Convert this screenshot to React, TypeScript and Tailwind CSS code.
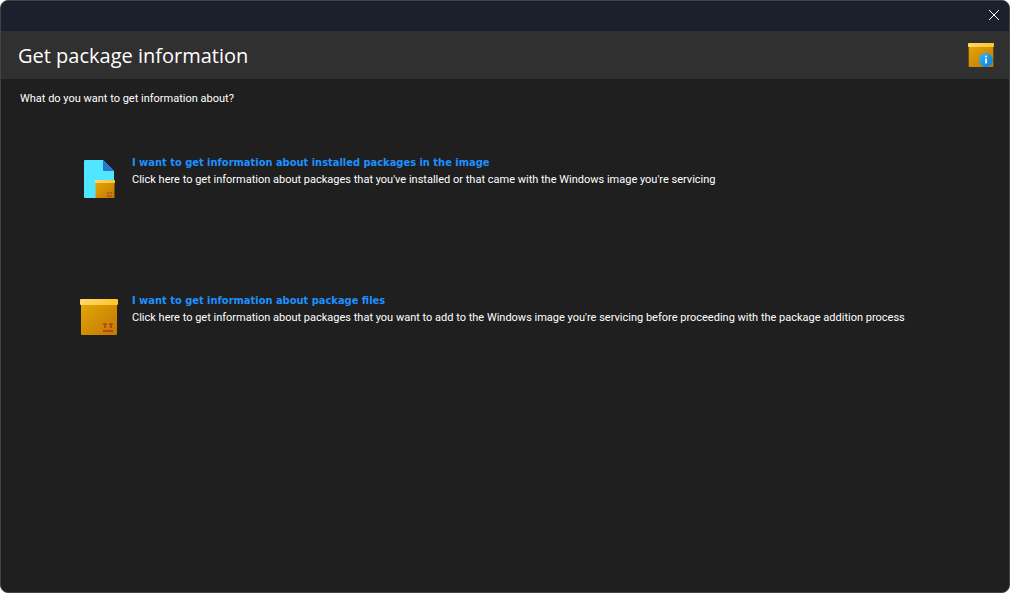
import React from "react";

function Box({ id }: { id: string }) {
  return (
    <>
      <defs>
        <linearGradient id={`${id}-body`} x1="0" y1="0" x2="1" y2="1">
          <stop offset="0" stopColor="#e5a505" />
          <stop offset="1" stopColor="#c07803" />
        </linearGradient>
        <linearGradient id={`${id}-lid`} x1="0" y1="0" x2="1" y2="0">
          <stop offset="0" stopColor="#ffd869" />
          <stop offset="1" stopColor="#fec52b" />
        </linearGradient>
      </defs>
      <rect x="1" y="5" width="36" height="31" rx="1" fill={`url(#${id}-body)`} />
      <rect x="0" y="0" width="38" height="6" rx="1" fill={`url(#${id}-lid)`} />
    </>
  );
}

function Marks() {
  return (
    <g fill="#b8461b">
      <path d="M23 26v-1l1-1h2l1 1v1h-1v3h-2v-3zM29 26v-1l1-1h2l1 1v1h-1v3h-2v-3z" />
      <rect x="23" y="31" width="10" height="2" />
    </g>
  );
}

function PackageInfoIcon() {
  return (
    <svg className="size-[26px]" viewBox="0 0 26 26" aria-hidden="true">
      <defs>
        <linearGradient id="info-badge" x1="0" y1="0" x2="1" y2="1">
          <stop offset="0" stopColor="#38b6f6" />
          <stop offset="1" stopColor="#087cd6" />
        </linearGradient>
      </defs>
      <svg y="1" width="26" height="24" viewBox="0 0 38 36" preserveAspectRatio="none">
        <Box id="header" />
      </svg>
      <circle cx="17.8" cy="18" r="7" fill="url(#info-badge)" />
      <circle cx="18" cy="14.6" r="1" fill="#fff" />
      <rect x="17.2" y="16.5" width="1.6" height="5" fill="#fff" />
    </svg>
  );
}

function InstalledIcon() {
  return (
    <svg className="h-[38px] w-[31px]" viewBox="0 0 31 38" aria-hidden="true">
      <path d="M1 0H19L30 11V38H1Q0 38 0 37V1Q0 0 1 0Z" fill="#50e6ff" />
      <path d="M19 0L30 11H20Q19 11 19 10Z" fill="#2874d4" />
      <svg x="11" y="20" width="20" height="18" viewBox="0 0 38 36" preserveAspectRatio="none">
        <Box id="installed" />
      </svg>
      <path d="M23 32h2v2h-2zM26 32h2v2h-2zM23 35h5v2h-5z" fill="#bc5d12" />
    </svg>
  );
}

function PackageFileIcon() {
  return (
    <svg className="h-9 w-[38px]" viewBox="0 0 38 36" aria-hidden="true">
      <Box id="file" />
      <Marks />
    </svg>
  );
}

interface OptionProps {
  icon: React.ReactNode;
  title: string;
  description: string;
}

function Option({ icon, title, description }: OptionProps) {
  return (
    <li className="flex gap-3">
      <div className="flex h-[50px] w-[42px] shrink-0 items-center justify-center">{icon}</div>
      <div className="flex flex-col items-start">
        <a
          href="#"
          className="font-['Tahoma','DejaVu_Sans_Condensed',sans-serif] text-[11px] leading-[17px] font-bold text-[#1e90ff] hover:underline"
        >
          {title}
        </a>
        <p className="text-[11px] leading-[17px]">{description}</p>
      </div>
    </li>
  );
}

export default function App() {
  return (
    <div className="min-h-screen bg-white">
      <div className="flex min-h-screen flex-col overflow-hidden rounded-lg border border-[#434343] bg-[#1f1f1f] font-['Tahoma','Roboto',sans-serif] text-white">
        <div className="flex h-[30px] justify-end bg-[#1a202c] pb-[2px]">
          <button type="button" aria-label="Close" className="flex w-[30px] items-center justify-center">
            <svg className="size-[10px]" viewBox="0 0 10 10" stroke="#fff" strokeWidth="1" aria-hidden="true">
              <path d="M0 0L10 10M10 0L0 10" />
            </svg>
          </button>
        </div>
        <header className="flex h-12 items-center justify-between bg-[#303030] pr-[15px] pl-[17px]">
          <h1 className="pt-[2px] font-['Segoe_UI','Open_Sans',sans-serif] text-[20px] leading-8">
            Get package information
          </h1>
          <PackageInfoIcon />
        </header>
        <main className="px-[19px] pt-[11px]">
          <p className="text-[11px] leading-[17px]">What do you want to get information about?</p>
          <ul className="mt-[47px] flex flex-col gap-[88px] pl-[58px]">
            <Option
              icon={<InstalledIcon />}
              title="I want to get information about installed packages in the image"
              description="Click here to get information about packages that you've installed or that came with the Windows image you're servicing"
            />
            <Option
              icon={<PackageFileIcon />}
              title="I want to get information about package files"
              description="Click here to get information about packages that you want to add to the Windows image you're servicing before proceeding with the package addition process"
            />
          </ul>
        </main>
      </div>
    </div>
  );
}
